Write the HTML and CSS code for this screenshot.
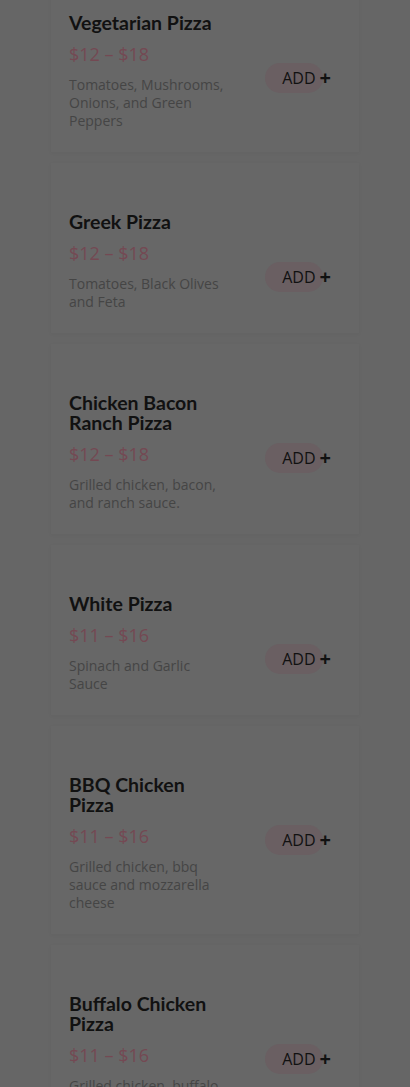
FILE: index.html
```html
<!DOCTYPE html>
<html lang="en">

<head>
    <meta charset="UTF-8">
    <meta name="viewport" content="width=device-width, initial-scale=1.0">
    <title>Menu</title>
    <link rel="stylesheet" href="styles.css">
</head>

<body>
    <div class="menu">
        <div class="item">
            <div class="info">
                <h3 class="name">Vegetarian Pizza</h3>
                <div class="price">$12 – $18</div>
                <p class="desc">Tomatoes, Mushrooms, Onions, and Green Peppers</p>
            </div>
            <button class="add"><span class="add-label">ADD</span><span class="plus">+</span></button>
        </div>

        <div class="item">
            <div class="info">
                <h3 class="name">Greek Pizza</h3>
                <div class="price">$12 – $18</div>
                <p class="desc">Tomatoes, Black Olives and Feta</p>
            </div>
            <button class="add"><span class="add-label">ADD</span><span class="plus">+</span></button>
        </div>

        <div class="item">
            <div class="info">
                <h3 class="name">Chicken Bacon Ranch Pizza</h3>
                <div class="price">$12 – $18</div>
                <p class="desc">Grilled chicken, bacon, and ranch sauce.</p>
            </div>
            <button class="add"><span class="add-label">ADD</span><span class="plus">+</span></button>
        </div>

        <div class="item">
            <div class="info">
                <h3 class="name">White Pizza</h3>
                <div class="price">$11 – $16</div>
                <p class="desc">Spinach and Garlic Sauce</p>
            </div>
            <button class="add"><span class="add-label">ADD</span><span class="plus">+</span></button>
        </div>

        <div class="item">
            <div class="info">
                <h3 class="name">BBQ Chicken Pizza</h3>
                <div class="price">$11 – $16</div>
                <p class="desc">Grilled chicken, bbq sauce and mozzarella cheese</p>
            </div>
            <button class="add"><span class="add-label">ADD</span><span class="plus">+</span></button>
        </div>

        <div class="item">
            <div class="info">
                <h3 class="name">Buffalo Chicken Pizza</h3>
                <div class="price">$11 – $16</div>
                <p class="desc">Grilled chicken, buffalo sauce and blue cheese</p>
            </div>
            <button class="add"><span class="add-label">ADD</span><span class="plus">+</span></button>
        </div>
    </div>
</body>

</html>
```

FILE: styles.css
```css
body {
    font-family: "Open Sans", Arial, sans-serif;
    margin: 0;
    background-color: #666666;
    overflow: hidden;
}

.menu {
    width: 308px;
    margin: -36px auto 0;
    display: flex;
    flex-direction: column;
    gap: 11px;
}

.item {
    display: flex;
    align-items: flex-start;
    padding: 49px 18px 22px;
    background-color: #676767;
    box-shadow: 0 1px 4px rgba(0, 0, 0, 0.04);
}

.info {
    width: 160px;
}

.name {
    margin: 0;
    font-family: Lato, "Open Sans", sans-serif;
    font-weight: 700;
    font-size: 19.5px;
    line-height: 20px;
    color: #111;
}

.price {
    margin-top: 9px;
    font-size: 18px;
    line-height: 24px;
    color: #744953;
}

.desc {
    margin: 10px 0 0;
    font-size: 14px;
    line-height: 18px;
    color: #454545;
}

.add {
    display: flex;
    align-items: center;
    margin: 50px 10px 0 auto;
    padding: 0;
    border: none;
    background: none;
    font-family: inherit;
    cursor: pointer;
}

.add-label {
    height: 30px;
    line-height: 30px;
    padding: 0 7px 0 17px;
    border-radius: 15px;
    background-color: #6a5f62;
    font-size: 16px;
    color: #111;
}

.plus {
    margin-left: -3px;
    font-size: 20px;
    font-weight: 700;
    line-height: 30px;
    color: #111;
}
```
